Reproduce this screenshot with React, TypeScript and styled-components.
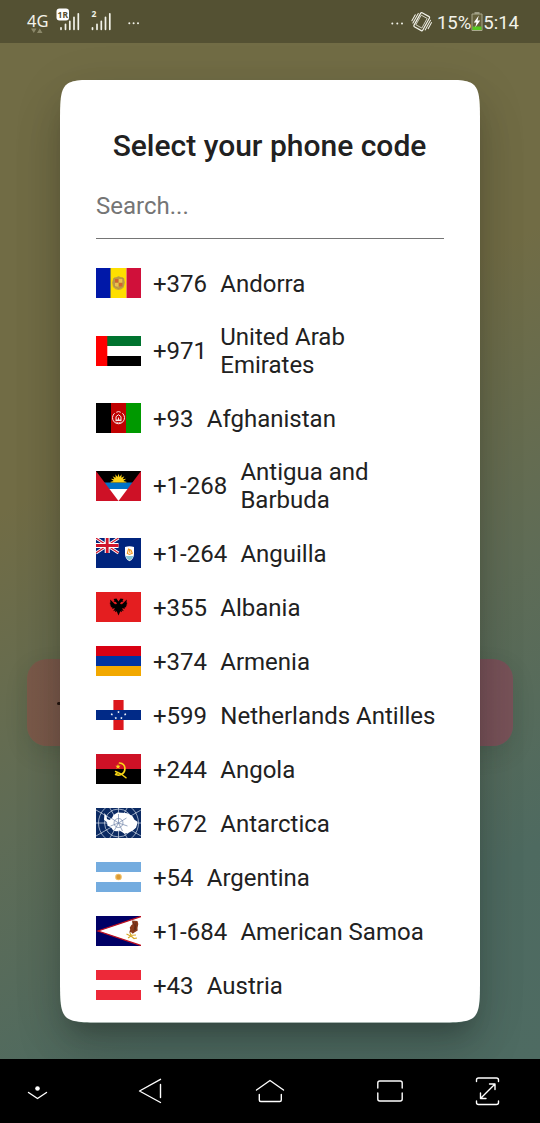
import React from "react";
import styled, { createGlobalStyle } from "styled-components";

const Global = createGlobalStyle`
  * { box-sizing: border-box; }
  html, body { margin: 0; padding: 0; background: #000; }
  body { font-family: Roboto, "Liberation Sans", sans-serif; overflow: hidden; }
`;

const Screen = styled.div`
  width: 540px;
  height: 1123px;
  display: flex;
  flex-direction: column;
`;

const Backdrop = styled.div`
  position: relative;
  height: 1059px;
  display: flex;
  flex-direction: column;
  background: linear-gradient(152deg, #716c45 0%, #716c45 38%, #5f6c56 62%, #4e6a60 84%, #4e6b62 100%);
`;

const StatusBar = styled.header`
  height: 43px;
  padding: 0 21px 0 27px;
  display: flex;
  justify-content: space-between;
  align-items: flex-start;
  background: rgba(0, 0, 0, 0.25);
  color: #f3f3ea;
`;

const StatusGroup = styled.div`
  display: flex;
  align-items: flex-start;
  font-size: 18.5px;
  line-height: 22px;
  padding-top: 12px;
`;

const StatusSvg = styled.svg`
  display: block;
  flex: none;
  overflow: visible;
`;

const Stage = styled.main`
  flex: 1;
  display: flex;
  justify-content: center;
  padding-top: 36.5px;
`;

const HiddenButton = styled.div`
  position: absolute;
  left: 27px;
  top: 659px;
  width: 486px;
  height: 87px;
  border-radius: 20px;
  background: linear-gradient(90deg, #7a5a49, #795357 50%, #785259);
  box-shadow: 0 8px 22px rgba(30, 50, 40, 0.16);
`;

const ButtonInk = styled.span`
  position: absolute;
  left: 30px;
  top: 43px;
  width: 4px;
  height: 3px;
  border-radius: 2px;
  background: #24150f;
`;

const Elevation = styled.div`
  position: relative;
  width: 420px;
  height: 943px;
  border-radius: 24px;
  box-shadow: 0 16px 22px -10px rgba(0, 0, 0, 0.2), 0 30px 46px 2px rgba(0, 0, 0, 0.13),
    0 10px 50px 4px rgba(0, 0, 0, 0.08);
`;

const Dialog = styled.section`
  height: 943px;
  padding: 48.5px 36px 0;
  background: #fff;
  color: #212121;
  clip-path: path("M0 46 C0 0 0 0 46 0 H374 C420 0 420 0 420 46 V897 C420 943 420 943 374 943 H46 C0 943 0 943 0 897 Z");
`;

const Title = styled.h1`
  margin: 0 1px 0 0;
  text-align: center;
  font-size: 30px;
  line-height: 36px;
  font-weight: 500;
  white-space: nowrap;
`;

const Search = styled.div`
  height: 75px;
  padding-top: 28px;
  border-bottom: 1.5px solid #757575;
  font-size: 24px;
  line-height: 28px;
  color: #757575;
`;

const List = styled.ul`
  list-style: none;
  margin: 0;
  padding: 17.9px 0 0;
`;

const Row = styled.li`
  display: flex;
  align-items: center;
  padding: 12px 0;
  font-size: 24px;
  line-height: 28.5px;
`;

const Flag = styled.svg`
  display: block;
  width: 45px;
  height: 30px;
  margin: -0.6px 0 0.6px;
  flex: none;
`;

const Code = styled.span`
  margin-left: 12px;
  flex: none;
`;

const Country = styled.span<{ $narrow?: boolean }>`
  margin-left: 13.2px;
  max-width: ${(p) => (p.$narrow ? "150px" : "none")};
`;

const NavBar = styled.nav`
  height: 64px;
  background: #000;
  display: flex;
`;

const NavIcons = styled.svg`
  display: block;
  fill: none;
  stroke: #fff;
  stroke-width: 1.4;
  stroke-linecap: round;
  stroke-linejoin: round;
`;

const spokes = Array.from({ length: 12 }, (_, i) => {
  const a = (i * Math.PI) / 6;
  return `M22.5 15L${22.5 + 30 * Math.cos(a)} ${15 + 30 * Math.sin(a)}`;
}).join("");

const sunRays = Array.from({ length: 17 }, (_, i) => {
  const a = Math.PI + (i * Math.PI) / 16;
  const r = i % 2 ? 5 : 8.3;
  return `${22.5 + r * Math.cos(a)},${11 + r * Math.sin(a)}`;
}).join(" ");

const flags: Record<string, React.ReactNode> = {
  ad: (
    <>
      <path fill="#0018a8" d="M0 0h15v30H0z" />
      <path fill="#fedf00" d="M14.500 0h16v30h-16z" />
      <path fill="#d0103a" d="M30.500 0H45v30H30.500z" />
      <path fill="#c9a33c" d="M22.500 8l2.500 1.300 3 .7 1 4.500-1.300 5L25 21.500 22.500 22l-3-.7-2.500-2.300-1-4.500 1.300-4 2.700-1z" />
      <path fill="#d2622f" d="M19 11h3.200v3.500H19zM23 15h3.500v3.500H23z" />
      <path fill="#eec04d" d="M23 11h3.500v3.500H23zM19 15h3.200v3.500H19z" />
      <path fill="none" stroke="#a98a52" strokeWidth=".8" d="M18 10v8l4.500 2.500L27 18v-8z" />
    </>
  ),
  ae: (
    <>
      <path fill="#fff" d="M0 0h45v30H0z" />
      <path fill="#00732f" d="M11 0h34v10H11z" />
      <path d="M11 20h34v10H11z" />
      <path fill="red" d="M0 0h11.300v30H0z" />
    </>
  ),
  af: (
    <>
      <path d="M0 0h15v30H0z" />
      <path fill="#bf0000" d="M15 0h15v30H15z" />
      <path fill="#090" d="M30 0h15v30H30z" />
      <g fill="none" stroke="#fff" strokeWidth="1" opacity=".9">
        <path d="M18.600 10.200a6 6 0 1 0 7.800 0" />
        <path d="M19.500 19q3 1.600 6 0" strokeWidth=".7" />
        <path d="M20 17v-3.300l2.500-2 2.500 2V17zM19.500 17.500h6M22.500 17v-2.500M20.300 9.300q2.200-1.500 4.400 0" />
      </g>
    </>
  ),
  ag: (
    <>
      <path fill="#fff" d="M0 0h45v30H0z" />
      <path d="M0 0h45v12H0z" />
      <path fill="#0072c6" d="M0 11.500h45V18H0z" />
      <polygon fill="#fcd116" points={`${sunRays} 30,11.500 15,11.500`} />
      <path fill="#ce1126" d="M0 0l22.500 30H0zM45 0L22.500 30H45z" />
    </>
  ),
  ai: (
    <>
      <path fill="#00247d" d="M0 0h45v30H0z" />
      <path stroke="#fff" strokeWidth="3" d="M0 0l22.500 15M22.500 0L0 15" />
      <path stroke="#cf142b" strokeWidth="1.100" d="M0 0l22.500 15M22.500 0L0 15" />
      <path stroke="#fff" strokeWidth="5" d="M11.200 0v15M0 7.500h22.500" />
      <path stroke="#cf142b" strokeWidth="2.800" d="M11.200 0v15M0 7.500h22.500" />
      <path fill="#fff" d="M29 9q4.500-1.500 9 0v7q0 5-4.500 7.300Q29 21 29 16z" />
      <path fill="#84c6d8" d="M29.500 18h8q-1 3-4 4.600-3-1.600-4-4.600z" />
      <path fill="none" stroke="#f29a20" strokeWidth="1.100" d="M31.300 15.500l1.200-4.500 2.500 1.200 1.300 3-2.800 1.300zM33.500 12l.5 3" />
    </>
  ),
  al: (
    <>
      <path fill="#e41e20" d="M0 0h45v30H0z" />
      <path d="M22.500 9.500l-2-3-3 .5 1 1.500-1 1 2.500.5 1 2-2 .3-4.800-4.800.3 3-1 .5 1.200 1.300-1 .7 1.600 1-.8 1 2 .5-.5 1.300 3-.5-1.800 3 2.300-1-.5 2 1.700-1 1.800 4.200 1.800-4.200 1.700 1-.5-2 2.300 1-1.800-3 3 .5-.5-1.300 2-.5-.8-1 1.600-1-1-.7 1.200-1.300-1-.5.3-3-4.800 4.800-2-.3 1-2 2.500-.5-1-1 1-1.500-3-.5z" />
    </>
  ),
  am: (
    <>
      <path fill="#d90012" d="M0 0h45v10H0z" />
      <path fill="#0033a0" d="M0 10h45v10H0z" />
      <path fill="#f2a800" d="M0 20h45v10H0z" />
    </>
  ),
  an: (
    <>
      <path fill="#fff" d="M0 0h45v30H0z" />
      <path fill="#dc171d" d="M17.400 0h10.200v30H17.400z" />
      <path fill="#012a87" d="M0 10h45v10H0z" />
      <g fill="#fff">
        {[[22.5, 12], [15.8, 14.2], [29.2, 14.2], [19.8, 18], [25.4, 18]].map(([x, y]) => (
          <path key={x} transform={`translate(${x} ${y})`} d="M0-1.300L.4-.4l.9.1-.7.6.2 1L0 .8l-.8.500.2-1-.7-.6.900-.1z" />
        ))}
      </g>
    </>
  ),
  ao: (
    <>
      <path fill="#ce1126" d="M0 0h45v15H0z" />
      <path d="M0 15h45v15H0z" />
      <g fill="none" stroke="#f9d616" strokeLinecap="round">
        <path strokeWidth="1.700" d="M23.500 9q5 .5 5.400 5 .2 5-4.400 6.800-2.300.8-4.500-.3" />
        <path strokeWidth="1.500" d="M19.500 17.500q5 1.500 10.500 6.300M19.500 20.500l2.500-2" />
      </g>
      <path fill="#f9d616" d="M22 10l.7 1.700 1.900.1-1.500 1.200.5 1.900-1.600-1.100-1.600 1.100.5-1.900-1.500-1.200 1.900-.1z" />
    </>
  ),
  aq: (
    <>
      <path fill="#0b2a63" d="M0 0h45v30H0z" />
      <g fill="none" stroke="#d5deea" strokeWidth=".7">
        <path d={spokes} />
        <circle cx="22.500" cy="15" r="8" />
        <circle cx="22.500" cy="15" r="14" />
        <circle cx="22.500" cy="15" r="20" />
      </g>
      <path fill="#fff" d="M8.500 5l2 3 .5 3 2.500 1 2.500-2 1.500-3 4-2.500 5 .2 5 .5 5 3 2 3.500 3 2-.5 3-1 3-3.500 3-4 2-4 1-2.500-1.600-2.500-1.500-3.500.6-3-1-2-3-3.500-1.500-.5-3.500-3-2.500z" />
      <g fill="none" stroke="#6f82a8" strokeWidth=".7">
        <path d="M22.500 15L15 10M22.500 15l-8 3M22.500 15V6M22.500 15l8-5M22.500 15l9 3M22.500 15l4 8M22.500 15l-4 7" />
        <circle cx="22.500" cy="15" r="4.500" />
      </g>
    </>
  ),
  ar: (
    <>
      <path fill="#74acdf" d="M0 0h45v30H0z" />
      <path fill="#fff" d="M0 10h45v10H0z" />
      <circle cx="22.500" cy="15" r="3.300" fill="#f0bd62" />
      <circle cx="22.500" cy="15" r="2.200" fill="#dc9a35" />
    </>
  ),
  as: (
    <>
      <path fill="#000066" d="M0 0h45v30H0z" />
      <path fill="#fff" stroke="#bd1021" strokeWidth="1.300" d="M47-.2L2 15l45 15.200z" />
      <path fill="#8a3a1c" d="M36 4.500l5.500.5.8 3-.8 4 .2 2.500-3 1.800-2 1.500-1.500-1.500-2 .5 1-3.500-.5-1.500 1.500-2.500 1.300-1z" />
      <path fill="none" stroke="#4c2416" strokeWidth=".6" d="M37 6l2 4-1 5M40 6l-.5 8" />
      <path fill="none" stroke="#d8a928" strokeWidth="1.200" d="M30.500 18l3 1.500 6.500-.5M32 22l3-2 3 2.500 3-.5M34 17l2 4" />
    </>
  ),
  at: (
    <>
      <path fill="#ed2939" d="M0 0h45v30H0z" />
      <path fill="#fff" d="M0 10h45v10H0z" />
    </>
  ),
};

const countries = [
  { id: "ad", code: "+376", name: "Andorra" },
  { id: "ae", code: "+971", name: "United Arab Emirates", narrow: true },
  { id: "af", code: "+93", name: "Afghanistan" },
  { id: "ag", code: "+1-268", name: "Antigua and Barbuda", narrow: true },
  { id: "ai", code: "+1-264", name: "Anguilla" },
  { id: "al", code: "+355", name: "Albania" },
  { id: "am", code: "+374", name: "Armenia" },
  { id: "an", code: "+599", name: "Netherlands Antilles" },
  { id: "ao", code: "+244", name: "Angola" },
  { id: "aq", code: "+672", name: "Antarctica" },
  { id: "ar", code: "+54", name: "Argentina" },
  { id: "as", code: "+1-684", name: "American Samoa" },
  { id: "at", code: "+43", name: "Austria" },
];

const NetworkType = styled.span`
  width: 30px;
  font-family: "Noto Sans", sans-serif;
  font-size: 16.5px;
  line-height: 17px;
`;

const SimLabel = styled.text`
  font: 700 8.500px "Noto Sans", sans-serif;
`;

const Battery = styled.span`
  margin-left: 5px;
`;

const bars = "M1.500 17.500v-1.500M6 17.500v-5M10.300 17.500V9.500M14.500 17.500V5.500M18.800 17.500V2";

export default function App() {
  return (
    <Screen>
      <Global />
      <Backdrop>
        <StatusBar>
          <StatusGroup>
            <NetworkType>4G</NetworkType>
            <StatusSvg width="90" height="30" viewBox="57 12 90 30">
              <g fill="#8b886a">
                <path d="M31 28.500h5.500l-2.700 4.500zM37 33h5.500l-2.700-4.500z" />
              </g>
              <g fill="none" stroke="#f3f3ea" strokeWidth="1.700" strokeLinecap="round">
                <path transform="translate(59.500 11.800)" d={bars} />
                <path transform="translate(91 11.800)" d={bars} />
              </g>
              <rect x="56.500" y="8.500" width="12.500" height="12" rx="3" fill="#fff" />
              <SimLabel x="57.600" y="17.600" fill="#55502f">1R</SimLabel>
              <SimLabel x="91.500" y="17.300" fill="#f3f3ea">2</SimLabel>
              <g fill="#f3f3ea">
                <circle cx="129.300" cy="23.300" r="1" />
                <circle cx="133.600" cy="23.300" r="1" />
                <circle cx="138" cy="23.300" r="1" />
              </g>
            </StatusSvg>
          </StatusGroup>
          <StatusGroup>
            <StatusSvg width="42" height="22" viewBox="389 12 42 22">
              <g fill="#f3f3ea">
                <circle cx="391.300" cy="23.400" r="1" />
                <circle cx="396.300" cy="23.400" r="1" />
                <circle cx="401" cy="23.400" r="1" />
              </g>
              <g
                transform="translate(420.700 21.700) rotate(29)"
                fill="none"
                stroke="#f3f3ea"
                strokeWidth="1.200"
                strokeLinecap="round"
              >
                <rect x="-5" y="-8" width="10" height="16" rx="1" />
                <rect x="-3.200" y="-5.500" width="6.400" height="11" strokeWidth=".7" />
                <path strokeWidth="1" d="M-7-5.500V5.500M-9-3V4M7-5.500V5.500M9-4V3" />
              </g>
            </StatusSvg>
            <Battery>15%</Battery>
            <StatusSvg width="12" height="22" viewBox="471 12 12 22">
              <path fill="#9c9b82" d="M474.500 12h5v2h-5z" />
              <path fill="#65603c" stroke="#aaa98e" d="M472 14h10v16.500h-10z" />
              <path fill="#55c81e" d="M472.500 26.500h9v3.500h-9z" />
              <path fill="#fff" d="M478.800 15.500l-5 7h2.700l-1.300 5 5-7h-2.700z" />
            </StatusSvg>
            <span>5:14</span>
          </StatusGroup>
        </StatusBar>
        <HiddenButton>
          <ButtonInk />
        </HiddenButton>
        <Stage>
          <Elevation>
            <Dialog>
              <Title>Select your phone code</Title>
              <Search>Search...</Search>
              <List>
                {countries.map((c) => (
                  <Row key={c.id}>
                    <Flag viewBox="0 0 45 30">{flags[c.id]}</Flag>
                    <Code>{c.code}</Code>
                    <Country $narrow={c.narrow}>{c.name}</Country>
                  </Row>
                ))}
              </List>
            </Dialog>
          </Elevation>
        </Stage>
      </Backdrop>
      <NavBar>
        <NavIcons width="540" height="64" viewBox="0 1059 540 64">
          <path d="M28.500 1092.500l9 6 9-6" />
          <circle cx="37.500" cy="1088.500" r="2.300" fill="#fff" stroke="none" />
          <path d="M160.500 1079.300L139.500 1091l21 11.500M160.500 1084.500v13" />
          <path d="M256.500 1090l13.500-9.500 13.500 9.500M259.300 1094.500v5.500q0 1.500 1.500 1.500h19q1.500 0 1.500-1.500v-5.500" />
          <path d="M377.800 1088v-5q0-2 2-2h20.400q2 0 2 2v5M377.800 1093v6q0 2 2 2h20.400q2 0 2-2v-6" />
          <path d="M476.500 1081.500v-1.500q0-2 2-2h18q2 0 2 2v1.500M476.500 1101v1.500q0 2 2 2h18q2 0 2-2v-1.500" />
          <path d="M480.500 1098.500l14.500-14.500M489.500 1084h5.500v5.500M480.500 1093v5.500h5.500" />
        </NavIcons>
      </NavBar>
    </Screen>
  );
}
